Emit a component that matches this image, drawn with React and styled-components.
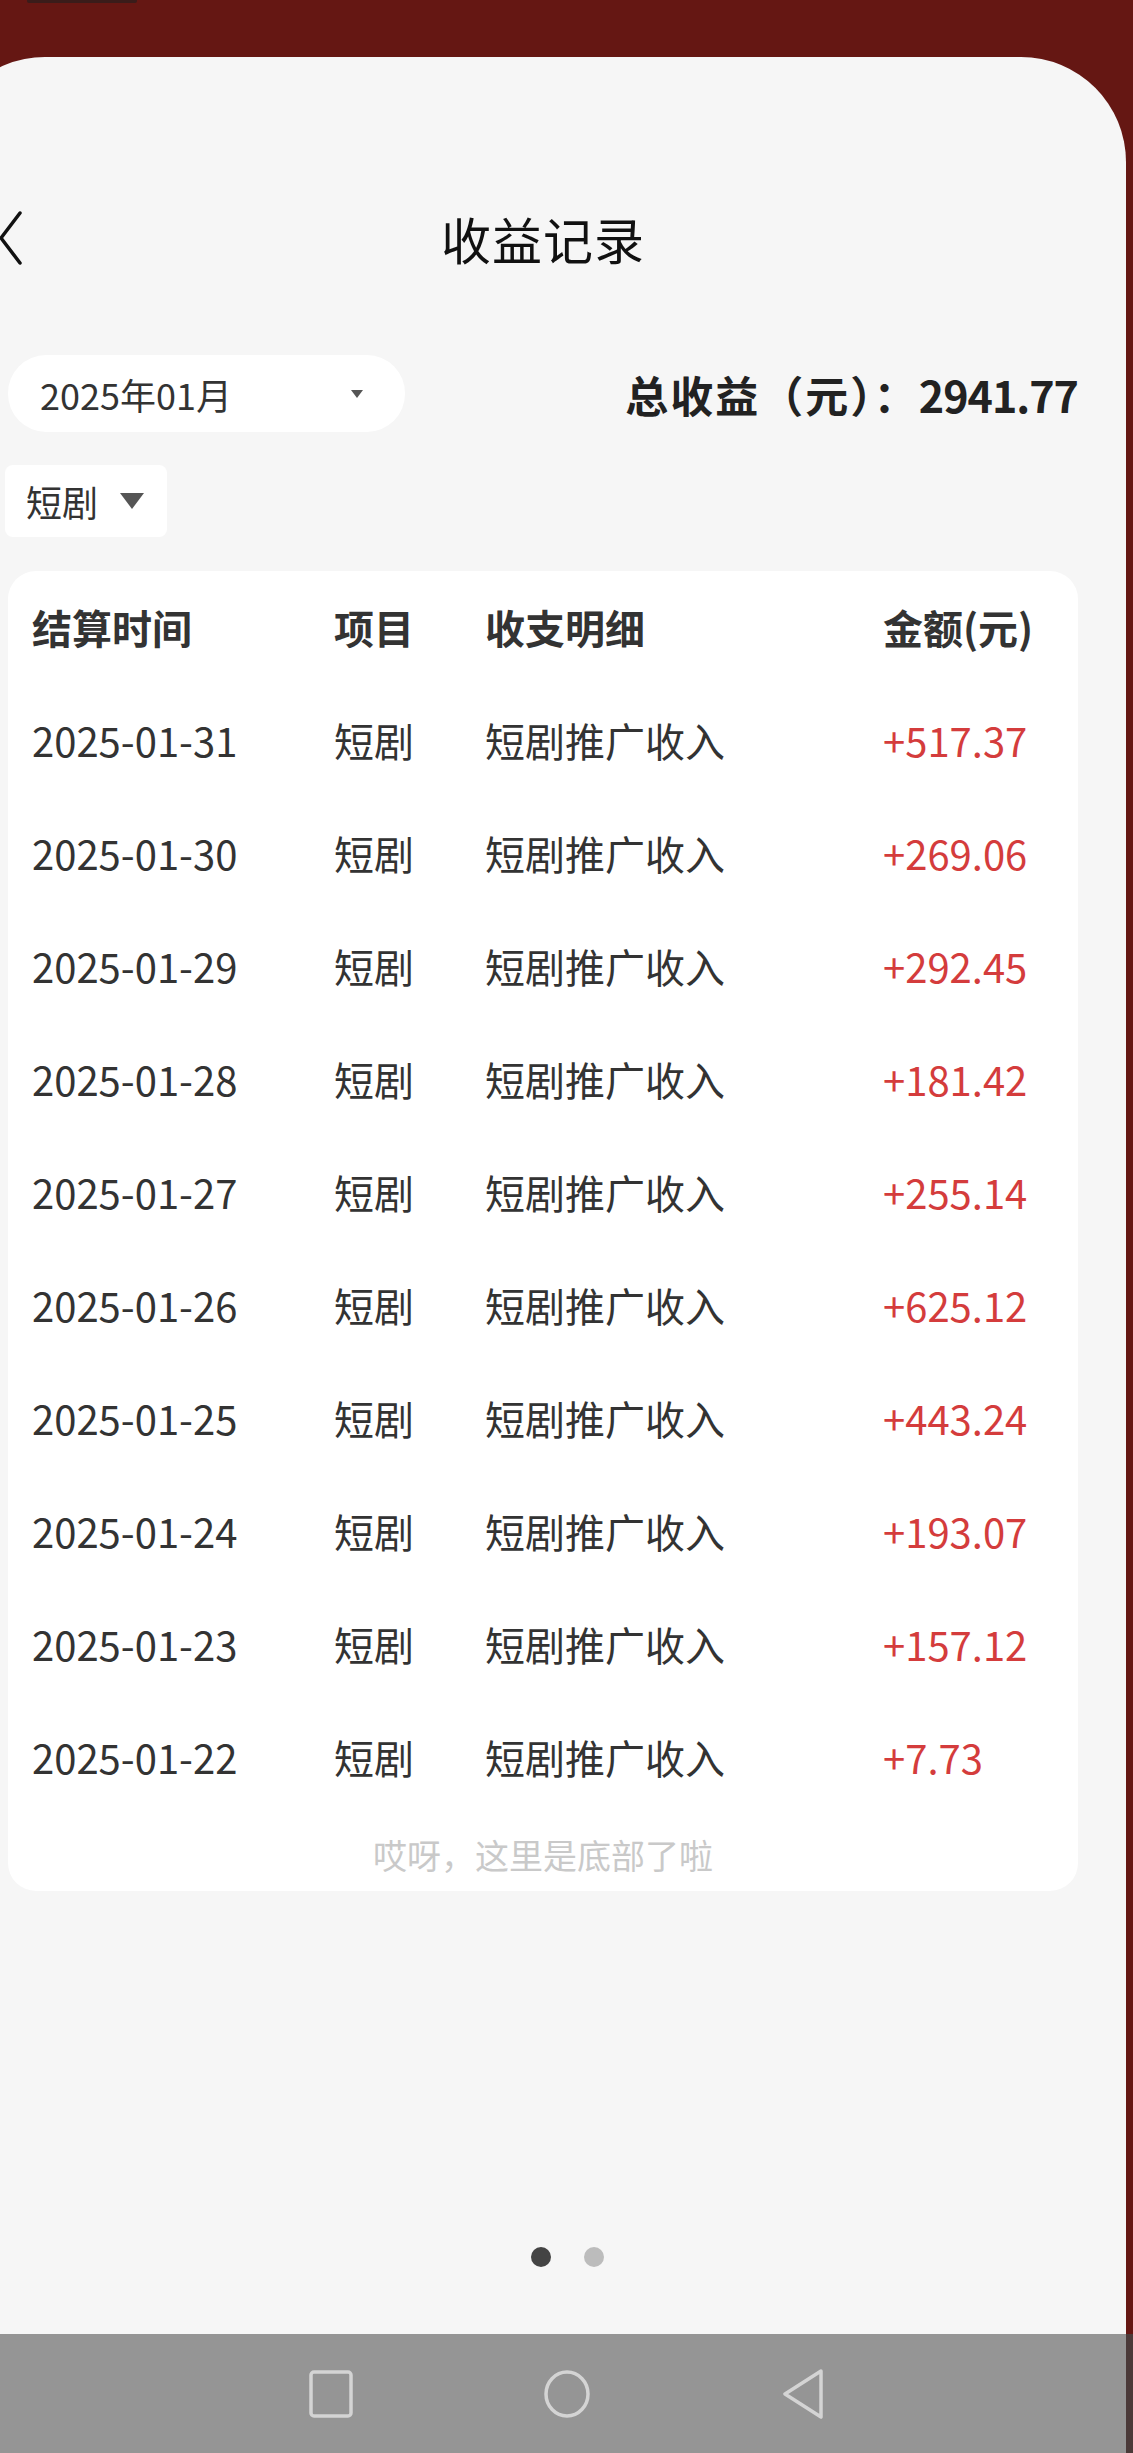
import React from "react";
import styled, { createGlobalStyle } from "styled-components";

const GlobalStyle = createGlobalStyle`
  html, body { margin: 0; padding: 0; }
  body {
    background: #651713;
    font-family: "Noto Sans CJK SC", "Noto Sans", sans-serif;
    -webkit-font-smoothing: antialiased;
  }
`;

const Page = styled.div`
  width: 1133px;
  min-height: 2453px;
  display: flex;
  flex-direction: column;
  overflow: hidden;
  background: #651713;
`;

const StatusStrip = styled.div`
  height: 57px;
  flex: none;
`;

const StatusNub = styled.div`
  width: 110px;
  height: 3px;
  margin-left: 27px;
  background: #3a1c1a;
  border-radius: 0 0 2px 2px;
`;

const Sheet = styled.div`
  flex: 1;
  margin-left: -60px;
  margin-right: 7px;
  padding-left: 60px;
  background: #f6f6f6;
  border-radius: 105px 105px 0 0;
  display: flex;
  flex-direction: column;
`;

const Inner = styled.div`
  flex: 1;
  display: flex;
  flex-direction: column;
  padding: 0 48px 0 8px;
`;

const Header = styled.div`
  margin-top: 131px;
  height: 100px;
  display: grid;
  grid-template-columns: 1fr auto 1fr;
  align-items: center;
`;

const BackButton = styled.div`
  margin-left: -11px;
  display: flex;
  align-items: center;
`;

const Title = styled.h1`
  margin: 0;
  font-size: 50px;
  font-weight: 400;
  color: #111;
  letter-spacing: 1px;
`;

const FilterRow = styled.div`
  margin-top: 67px;
  display: flex;
  align-items: center;
  justify-content: space-between;
`;

const DatePicker = styled.div`
  width: 397px;
  height: 77px;
  box-sizing: border-box;
  padding: 0 42px 0 32px;
  background: #fff;
  border-radius: 38px;
  display: flex;
  align-items: center;
  justify-content: space-between;
  font-size: 36px;
  color: #333;
`;

const Caret = styled.span`
  width: 0;
  height: 0;
  border-left: ${(p) => p.$size}px solid transparent;
  border-right: ${(p) => p.$size}px solid transparent;
  border-top: ${(p) => Math.round(p.$size * 1.3)}px solid #555;
`;

const Total = styled.div`
  font-size: 43px;
  font-weight: 700;
  color: #222;
`;

const TotalLabel = styled.span`
  letter-spacing: 2px;
`;

const TotalValue = styled.span`
  letter-spacing: -1px;
`;

const Chip = styled.div`
  margin-top: 33px;
  margin-left: -3px;
  align-self: flex-start;
  width: 162px;
  height: 72px;
  box-sizing: border-box;
  padding-left: 21px;
  background: #fff;
  border-radius: 8px;
  display: flex;
  align-items: center;
  gap: 22px;
  font-size: 36px;
  color: #333;
`;

const TableCard = styled.div`
  margin-top: 34px;
  background: #fff;
  border-radius: 28px;
  display: flex;
  flex-direction: column;
`;

const Row = styled.div`
  display: grid;
  grid-template-columns: 302px 151px 398px 1fr;
  align-items: center;
  padding-left: 24px;
  height: ${(p) => (p.$head ? 112 : 113)}px;
  font-size: 40px;
  font-weight: ${(p) => (p.$head ? 700 : 400)};
  color: #333;
`;

const Amount = styled.span`
  color: #d43c3c;
`;

const EndNote = styled.div`
  padding: 24px 0 18px;
  line-height: 36px;
  text-align: center;
  font-size: 34px;
  color: #c9c9c9;
`;

const Dots = styled.div`
  margin-top: auto;
  margin-bottom: 67px;
  margin-right: -48px;
  display: flex;
  justify-content: center;
  gap: 33px;
`;

const Dot = styled.span`
  width: 20px;
  height: 20px;
  border-radius: 50%;
  background: ${(p) => (p.$active ? "#444" : "#bcbcbc")};
`;

const NavBar = styled.div`
  height: 119px;
  flex: none;
  background: #959595;
  box-shadow: inset -7px 0 0 #4b3a39;
  display: flex;
  align-items: center;
  justify-content: center;
  gap: 188px;
`;

const NavIcon = styled.svg`
  width: 48px;
  height: 50px;
  display: block;
`;

const rows = [
  ["2025-01-31", "+517.37"],
  ["2025-01-30", "+269.06"],
  ["2025-01-29", "+292.45"],
  ["2025-01-28", "+181.42"],
  ["2025-01-27", "+255.14"],
  ["2025-01-26", "+625.12"],
  ["2025-01-25", "+443.24"],
  ["2025-01-24", "+193.07"],
  ["2025-01-23", "+157.12"],
  ["2025-01-22", "+7.73"],
];

export default function App() {
  return (
    <>
      <GlobalStyle />
      <Page>
        <StatusStrip>
          <StatusNub />
        </StatusStrip>
        <Sheet>
          <Inner>
            <Header>
              <BackButton>
                <svg width="26" height="56" viewBox="0 0 26 56">
                  <polyline
                    points="23,3 4,28 23,53"
                    fill="none"
                    stroke="#111"
                    strokeWidth="3.5"
                    strokeLinecap="round"
                    strokeLinejoin="round"
                  />
                </svg>
              </BackButton>
              <Title>收益记录</Title>
              <span />
            </Header>
            <FilterRow>
              <DatePicker>
                <span>2025年01月</span>
                <Caret $size={6} />
              </DatePicker>
              <Total>
                <TotalLabel>总收益（元）：</TotalLabel>
                <TotalValue>2941.77</TotalValue>
              </Total>
            </FilterRow>
            <Chip>
              <span>短剧</span>
              <Caret $size={12} />
            </Chip>
            <TableCard>
              <Row $head>
                <span>结算时间</span>
                <span>项目</span>
                <span>收支明细</span>
                <span>金额(元)</span>
              </Row>
              {rows.map(([date, amt]) => (
                <Row key={date}>
                  <span>{date}</span>
                  <span>短剧</span>
                  <span>短剧推广收入</span>
                  <Amount>{amt}</Amount>
                </Row>
              ))}
              <EndNote>哎呀，这里是底部了啦</EndNote>
            </TableCard>
            <Dots>
              <Dot $active />
              <Dot />
            </Dots>
          </Inner>
        </Sheet>
        <NavBar>
          <NavIcon viewBox="0 0 48 50">
            <rect x="4" y="3" width="40" height="44" rx="3" fill="none" stroke="#d4d4d4" strokeWidth="3.5" />
          </NavIcon>
          <NavIcon viewBox="0 0 48 50">
            <ellipse cx="24" cy="25" rx="21" ry="22" fill="none" stroke="#d4d4d4" strokeWidth="3.5" />
          </NavIcon>
          <NavIcon viewBox="0 0 48 50">
            <polygon
              points="42,2 6,25 42,48"
              fill="none"
              stroke="#d4d4d4"
              strokeWidth="3.5"
              strokeLinejoin="round"
            />
          </NavIcon>
        </NavBar>
      </Page>
    </>
  );
}
